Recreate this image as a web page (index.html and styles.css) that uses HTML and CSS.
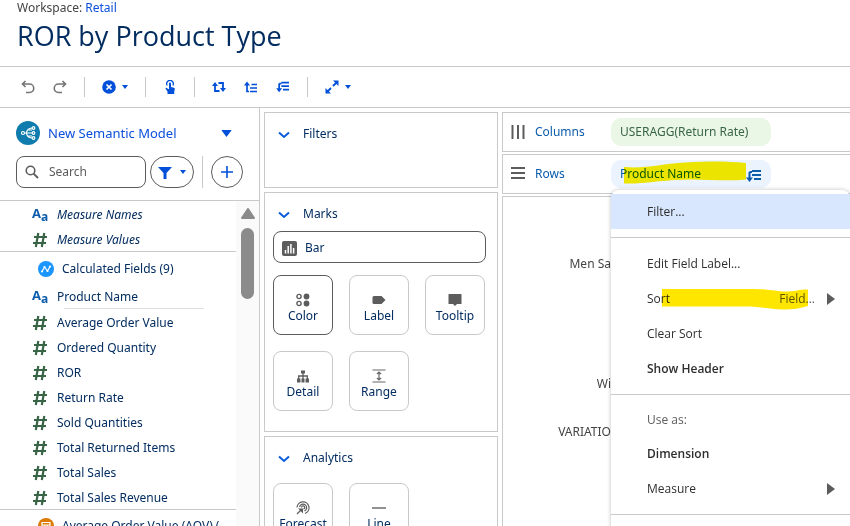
FILE: index.html
```html
<!DOCTYPE html>
<html lang="en">
<head>
<meta charset="utf-8">
<title>ROR by Product Type</title>
<link rel="stylesheet" href="styles.css">
</head>
<body>
<svg class="defs" aria-hidden="true">
  <symbol id="hash" viewBox="0 0 16 16"><path d="M6.300 1 3.800 15M12.300 1 9.800 15M2 5h13M1 11h13" fill="none" stroke="currentColor" stroke-width="2.200"/></symbol>
  <symbol id="chev" viewBox="0 0 12 8"><path d="M1 1.500 6 6l5-4.500" fill="none" stroke="currentColor" stroke-width="2"/></symbol>
  <symbol id="caret" viewBox="0 0 6 4"><path d="M0 0h6L3 4z" fill="currentColor"/></symbol>
  <symbol id="sortdesc" viewBox="0 0 16 14"><path d="M3.500 3v7M6 2h9M6 6h9M8 10h7M3.500 3H6" fill="none" stroke="currentColor" stroke-width="2"/><path d="M0 8.500h7L3.500 13z" fill="currentColor"/></symbol>
</svg>
<header class="head">
  <div class="crumb">Workspace: <a href="#">Retail</a></div>
  <h1>ROR by Product Type</h1>
</header>
<nav class="toolbar">
  <button class="tool grey" aria-label="Undo"><svg width="14" height="14" viewBox="0 0 14 14"><path d="M4.500 1 1.500 4l3 3M1.500 4H8.500a4 4 0 0 1 0 8.500H5" fill="none" stroke="currentColor" stroke-width="1.600"/></svg></button>
  <button class="tool grey" aria-label="Redo"><svg width="14" height="14" viewBox="0 0 14 14"><path d="M9.500 1l3 3-3 3M12.500 4H5.500a4 4 0 0 0 0 8.500H9" fill="none" stroke="currentColor" stroke-width="1.600"/></svg></button>
  <span class="sep"></span>
  <button class="tool wide" aria-label="Clear"><svg width="14" height="14" viewBox="0 0 14 14"><circle cx="7" cy="7" r="6.800" fill="currentColor"/><path d="M4.500 4.500l5 5M9.500 4.500l-5 5" stroke="#fff" stroke-width="1.700"/></svg><svg width="6" height="4"><use href="#caret"/></svg></button>
  <span class="sep"></span>
  <button class="tool" aria-label="Interact"><svg width="10" height="14" viewBox="0 0 10 14"><path d="M2.200 5.500A3.300 3.300 0 1 1 7.800 5.500" fill="none" stroke="currentColor" stroke-width="1.300"/><path d="M4 3.500a1 1 0 0 1 2 0V7l3 .8q1 .3.8 1.400L9.200 11.500H2.500L.4 8.500q.8-1.400 2 0L4 9.300zM2.500 11h6.700V14H2.500z" fill="currentColor"/></svg></button>
  <span class="sep"></span>
  <button class="tool" aria-label="Swap rows and columns"><svg width="14" height="12" viewBox="0 0 14 12"><path d="M3 3.500V10h4.500M6.500 2H11v6" fill="none" stroke="currentColor" stroke-width="1.800"/><path d="M0 5h6L3 1zM8 7h6l-3 4z" fill="currentColor"/></svg></button>
  <button class="tool" aria-label="Sort ascending"><svg width="14" height="12" viewBox="0 0 14 12"><path d="M3 3v7.500h2M7.500 3.500H13M6 7h7M6 10.500h7" fill="none" stroke="currentColor" stroke-width="1.700"/><path d="M0 4.500h6L3 .5z" fill="currentColor"/></svg></button>
  <button class="tool" aria-label="Sort descending"><svg width="14" height="12" viewBox="0 0 16 14"><use href="#sortdesc"/></svg></button>
  <span class="sep"></span>
  <button class="tool wide" aria-label="Fit"><svg width="14" height="14" viewBox="0 0 14 14"><path d="M2 12l4-4M8 6l4-4" stroke="currentColor" stroke-width="1.800"/><path d="M8 .5h5.500V6zM.5 8v5.500H6z" fill="currentColor"/></svg><svg width="6" height="4"><use href="#caret"/></svg></button>
</nav>
<main class="work">
  <aside class="side">
    <div class="model">
      <svg width="24" height="24" viewBox="0 0 24 24"><circle cx="12" cy="12" r="12" fill="#107cad"/><g fill="none" stroke="#fff" stroke-width="1.200"><circle cx="7" cy="12" r="1.500"/><circle cx="17.500" cy="7" r="1.300"/><circle cx="17.500" cy="12" r="1.300"/><circle cx="17.500" cy="17" r="1.300"/><path d="M8.500 12H16M10.500 12q.3-4.500 5.500-5M10.500 12q.3 4.500 5.500 5M12 9h4M12 15h4"/></g></svg>
      <a href="#">New Semantic Model</a>
      <button class="tool" aria-label="Choose model"><svg width="11" height="7" viewBox="0 0 6 4"><use href="#caret"/></svg></button>
    </div>
    <div class="find">
      <label class="search"><svg width="14" height="14" viewBox="0 0 14 14"><circle cx="5.500" cy="5.500" r="4.300" fill="none" stroke="#5c5c5c" stroke-width="1.600"/><path d="M8.600 8.600 13 13" stroke="#5c5c5c" stroke-width="1.900"/></svg><input type="text" placeholder="Search" aria-label="Search"></label>
      <button class="pillbtn" aria-label="Filter fields"><svg width="14" height="13" viewBox="0 0 14 13"><path d="M0 1h14L8.500 7V13h-3V7z" fill="currentColor"/></svg><svg width="6" height="4"><use href="#caret"/></svg></button>
      <span class="sep"></span>
      <button class="round" aria-label="Add"><svg width="12" height="12" viewBox="0 0 12 12"><path d="M6 0v12M0 6h12" stroke="currentColor" stroke-width="1.600"/></svg></button>
    </div>
    <div class="fields">
      <div class="list">
        <ul class="group top">
          <li class="ital"><span class="aa">A<small>a</small></span>Measure Names</li>
          <li class="ital"><svg class="ic"><use href="#hash"/></svg>Measure Values</li>
        </ul>
        <div class="folder"><svg width="16" height="16" viewBox="0 0 16 16"><circle cx="8" cy="8" r="8" fill="#1b96ff"/><path d="M4 10.500 6.500 6l3 4L12 5.500" fill="none" stroke="#fff" stroke-width="1.200"/><g fill="#fff"><circle cx="4" cy="10.500" r="1.100"/><circle cx="6.500" cy="6" r="1.100"/><circle cx="9.500" cy="10" r="1.100"/><circle cx="12" cy="5.500" r="1.100"/></g></svg>Calculated Fields (9)</div>
        <ul class="group"><li><span class="aa">A<small>a</small></span>Product Name</li></ul>
        <hr>
        <ul class="group">
          <li><svg class="ic"><use href="#hash"/></svg>Average Order Value</li>
          <li><svg class="ic"><use href="#hash"/></svg>Ordered Quantity</li>
          <li><svg class="ic"><use href="#hash"/></svg>ROR</li>
          <li><svg class="ic"><use href="#hash"/></svg>Return Rate</li>
          <li><svg class="ic"><use href="#hash"/></svg>Sold Quantities</li>
          <li><svg class="ic"><use href="#hash"/></svg>Total Returned Items</li>
          <li><svg class="ic"><use href="#hash"/></svg>Total Sales</li>
          <li><svg class="ic"><use href="#hash"/></svg>Total Sales Revenue</li>
        </ul>
        <div class="folder last"><svg width="16" height="16" viewBox="0 0 16 16"><circle cx="8" cy="8" r="8" fill="#dd7a01"/><path d="M4 4.500h8v7H4zM4 7h8M6.700 7v4.500M9.300 7v4.500" fill="none" stroke="#fff" stroke-width="1.200"/></svg>Average Order Value (AOV) (</div>
      </div>
      <div class="gutter"><svg width="14" height="11" viewBox="0 0 14 11"><path d="M7 1 13 10H1z" fill="#8b8b8b" stroke="#8b8b8b" stroke-width="2" stroke-linejoin="round"/></svg><span class="thumb"></span></div>
    </div>
  </aside>
  <section class="cards">
    <div class="card filters"><h2><svg width="12" height="8"><use href="#chev"/></svg>Filters</h2></div>
    <div class="card marks"><h2><svg width="12" height="8"><use href="#chev"/></svg>Marks</h2>
      <button class="marktype"><svg width="15" height="15" viewBox="0 0 15 15"><rect width="15" height="15" rx="2" fill="#5c5c5c"/><path d="M3.500 12.500V9M6.200 12.500V5M8.900 12.500V3M11.600 12.500V7" stroke="#fff" stroke-width="1.500"/></svg>Bar</button>
      <div class="tiles">
        <button class="tile on"><svg width="14" height="14" viewBox="0 0 14 14"><g fill="none" stroke="#5c5c5c" stroke-width="1.400"><circle cx="3" cy="3.500" r="2.100"/><circle cx="3" cy="10.500" r="2.100"/></g><g fill="#5c5c5c"><circle cx="10.500" cy="3.500" r="2.900"/><circle cx="10.500" cy="10.500" r="2.900"/></g></svg>Color</button>
        <button class="tile"><svg width="14" height="14" viewBox="0 0 14 14"><path d="M2 3h7.500L13.500 7l-4 4H2Q.500 11 .500 9.500v-5Q.500 3 2 3z" fill="#5c5c5c"/></svg>Label</button>
        <button class="tile"><svg width="14" height="14" viewBox="0 0 14 14"><path d="M1 1h12q.500 0 .500.500V11H9l-2 2-2-2H.500V1.500Q.500 1 1 1z" fill="#5c5c5c"/></svg>Tooltip</button>
        <button class="tile"><svg width="14" height="14" viewBox="0 0 14 14"><path d="M5 1.500h4v3H5zM1 9.500h3.500v4H1zM5.500 9.500h3v4h-3zM9.500 9.500H13v4H9.500z" fill="#5c5c5c"/><path d="M7 4v6M2.700 10V7h8.600v3" fill="none" stroke="#5c5c5c" stroke-width="1.300"/></svg>Detail</button>
        <button class="tile"><svg width="14" height="14" viewBox="0 0 14 14"><path d="M.500 1h13M.500 13h13M7 3v8M5 5l2-2 2 2M5 9l2 2 2-2" fill="none" stroke="#666" stroke-width="1.200"/></svg>Range</button>
      </div>
    </div>
    <div class="card analytics"><h2><svg width="12" height="8"><use href="#chev"/></svg>Analytics</h2>
      <div class="tiles">
        <button class="tile"><svg width="14" height="14" viewBox="0 0 14 14"><path d="M1 6.500a6 6 0 1 1 8 6M3.500 6a3.600 3.600 0 1 1 5 4M5.500 6.500a1.600 1.600 0 1 1 2 1.500M1 13l4.500-4.500" fill="none" stroke="#5c5c5c" stroke-width="1.200"/><path d="M2 7.500h5v5z" fill="#5c5c5c"/></svg>Forecast</button>
        <button class="tile"><svg width="14" height="14" viewBox="0 0 14 14"><path d="M0 7h14" stroke="#777" stroke-width="1.600"/></svg>Line</button>
      </div>
    </div>
  </section>
  <section class="view">
    <div class="shelf"><svg width="14" height="14" viewBox="0 0 14 14"><path d="M1.500 0v14M7 0v14M12.500 0v14" stroke="#5c5c5c" stroke-width="2"/></svg><span class="name">Columns</span><button class="pill green">USERAGG(Return Rate)</button></div>
    <div class="shelf"><svg width="14" height="14" viewBox="0 0 14 14"><path d="M0 1h14M0 6h14M0 11h14" stroke="#5c5c5c" stroke-width="2"/></svg><span class="name">Rows</span>
      <div class="anchor">
        <button class="pill blue">Product Name<svg width="16" height="18" viewBox="0 -4 16 18"><path d="M3.500 3v7M6 2h9M6 6h9M8 10h7M3.500 3H6" fill="none" stroke="currentColor" stroke-width="2"/><path d="M0 8.500h7L3.500 13z" fill="currentColor"/></svg></button>
        <svg class="marker m1" width="124" height="26" viewBox="0 0 124 26"><path d="M1 7C22 9 38 4 62 2.500S104 1 123 3V19.500C98 22 78 18 52 20S16 24 1 23.500z" fill="#fff000"/></svg>
        <div class="menu" role="menu">
          <button class="item hot">Filter...</button>
          <hr>
          <button class="item">Edit Field Label...</button>
          <button class="item">Sort<span class="val">Field...</span><i class="arrow"></i><svg class="marker m2" width="146" height="22" viewBox="0 0 146 22"><path d="M0 1H90C108 1 116 4 126 3.500S138 1 146 1.500V18C134 22 120 22 108 20.500S92 18.500 80 18.500H0z" fill="#ffe600"/></svg></button>
          <button class="item">Clear Sort</button>
          <button class="item strong">Show Header</button>
          <hr>
          <div class="item note">Use as:</div>
          <button class="item strong">Dimension</button>
          <button class="item">Measure<i class="arrow"></i></button>
          <hr>
        </div>
      </div>
    </div>
    <div class="canvas">
      <span>Men Sa</span><span>Wi</span><span>VARIATIO</span>
    </div>
  </section>
</main>
</body>
</html>
```
FILE: styles.css
```css
* { box-sizing: border-box; }
body {
  margin: 0;
  height: 100vh;
  overflow: hidden;
  display: flex;
  flex-direction: column;
  background: #fff;
  color: #032d60;
  font: 12px/20px "Noto Sans", "Open Sans", sans-serif;
}
button, input { font: inherit; color: inherit; background: none; border: 0; padding: 0; margin: 0; }
button { cursor: pointer; }
a { color: #0b4fdb; text-decoration: none; }
svg { flex: none; display: block; }
.defs { position: absolute; width: 0; height: 0; }
h1, h2, ul { margin: 0; padding: 0; font-weight: 400; list-style: none; }
hr { border: 0; margin: 0; height: 1px; background: #c9c9c9; }

.head { height: 66px; padding: 0 17px; flex: none; }
.crumb { line-height: 16px; color: #444; }
h1 { font: 27px/40px "Open Sans", sans-serif; color: #032d60; }

.toolbar {
  flex: none;
  height: 42px;
  padding: 0 12px;
  display: flex;
  align-items: center;
  border: solid #c9c9c9;
  border-width: 1px 0;
}
.tool { width: 16px; height: 20px; display: flex; align-items: center; justify-content: center; gap: 6px; color: #0250d9; }
.toolbar .tool { margin: 0 8px; }
.toolbar .tool.wide { width: 28px; margin: 0 16px; }
.toolbar .grey { color: #747474; }
.sep { width: 1px; height: 20px; background: #c9c9c9; }
.toolbar .sep { margin: 0 0 0 8px; }
.toolbar .wide + .sep { margin-left: 0; }
.toolbar .sep + .tool { margin-left: 16px; }

.work { flex: 1; min-height: 0; display: flex; }
.side { width: 260px; flex: none; border-right: 1px solid #c9c9c9; display: flex; flex-direction: column; }
.model { height: 48px; padding: 2px 27px 0 16px; display: flex; align-items: center; gap: 8px; font-size: 13px; }
.model .tool { margin-left: auto; width: 12px; }
.find { height: 32px; padding: 0 16px; display: flex; align-items: center; }
.search { flex: 1; height: 32px; border: 1px solid #5c5c5c; border-radius: 8px; display: flex; align-items: center; gap: 10px; padding: 0 8px; }
.search input { width: 100%; min-width: 0; outline: 0; }
.search input::placeholder { color: #5c5c5c; opacity: 1; }
.pillbtn, .round { height: 32px; border: 1px solid #5c5c5c; border-radius: 16px; color: #0250d9; display: flex; align-items: center; justify-content: center; }
.pillbtn { width: 44px; gap: 8px; margin: 0 8px 0 4px; }
.find .sep { height: 32px; }
.round { width: 32px; margin-left: 8px; }
.fields { flex: 1; min-height: 0; margin-top: 12px; border-top: 1px solid #c9c9c9; display: flex; overflow: hidden; }
.list { flex: 1; min-width: 0; }
.group li { height: 25px; padding: 2px 0 0 32px; display: flex; align-items: center; gap: 9px; }
.group.top { border-bottom: 1px solid #c9c9c9; }
.ital { font-style: italic; }
.ic { width: 16px; height: 16px; color: #396547; }
.aa { width: 16px; height: 20px; font: 700 13px/16px "Open Sans", sans-serif; color: #0b5cab; display: flex; }
.aa small { font-size: 12px; line-height: 16px; align-self: flex-end; }
.folder { height: 31px; padding: 2px 0 0 38px; display: flex; align-items: center; gap: 8px; white-space: nowrap; }
.list hr { margin: 0 32px 0 64px; background: #ddd; }
.folder.last { border-top: 1px solid #c9c9c9; }
.gutter { width: 23px; background: #fafafa; display: flex; flex-direction: column; align-items: center; gap: 9px; padding-top: 7px; }
.thumb { width: 13px; height: 71px; border-radius: 7px; background: #8b8b8b; }

.cards { width: 238px; flex: none; padding: 4px 0 0 4px; display: flex; flex-direction: column; gap: 4px; }
.card { flex: none; border: 1px solid #c9c9c9; padding: 0 8px; }
.filters { height: 76px; }
.marks { height: 240px; }
.analytics { height: 160px; }
.card h2 { font-size: 12px; height: 38px; padding: 4px 0 0 5px; display: flex; align-items: center; gap: 13px; }
.card h2 svg { color: #0b5cdb; margin-top: 2px; }
.marktype { width: 213px; height: 32px; border: 1px solid #5c5c5c; border-radius: 8px; display: flex; align-items: center; gap: 8px; padding: 2px 8px 0; }
.tiles { display: grid; grid-template-columns: repeat(3, 60px); gap: 16px; padding-top: 12px; }
.analytics .tiles { padding-top: 8px; }
.tile { height: 60px; border: 1px solid #c9c9c9; border-radius: 8px; display: flex; flex-direction: column; align-items: center; padding-top: 17px; line-height: 18px; }
.tile.on { border-color: #5c5c5c; }

.view { flex: 1; min-width: 0; padding: 4px 0 0 4px; display: flex; flex-direction: column; gap: 2px; }
.shelf { flex: none; height: 40px; border: 1px solid #c9c9c9; border-right: 0; display: flex; align-items: center; padding-left: 8px; }
.name { width: 76px; margin-left: 10px; color: #0b5cab; }
.anchor { position: relative; flex: 1; }
.pill { width: 160px; height: 28px; border-radius: 10px; padding: 0 9px; display: flex; align-items: center; justify-content: space-between; white-space: nowrap; }
.green { background: #ebf7e6; color: #396547; }
.blue { background: #ebf3ff; color: #0b5cab; }
.marker { position: absolute; mix-blend-mode: multiply; pointer-events: none; }
.m1 { left: 12px; top: 0; }
.m2 { left: 51px; top: 7px; }
.menu { position: absolute; left: 0; right: 0; top: 30px; padding: 4px 0 16px; background: #fff; border-radius: 8px; box-shadow: 0 0 4px rgba(0, 0, 0, .25); color: #2e2e2e; font-family: "Open Sans", sans-serif; }
.item { position: relative; width: 100%; height: 35px; padding: 0 15px 0 36px; display: flex; align-items: center; text-align: left; }
.hot { background: #d8e6fe; }
.menu hr { margin: 8px 0; }
.val { margin-left: auto; color: #5c5c5c; }
.arrow { margin-left: auto; border: solid transparent; border-width: 6px 0 6px 8px; border-left-color: #5c5c5c; }
.val + .arrow { margin-left: 12px; }
.strong { font-weight: 600; }
.note { height: 33px; color: #5c5c5c; }
.canvas { flex: 1; border: 1px solid #c9c9c9; border-width: 1px 0 0 1px; padding-top: 57px; color: #444; }
.canvas span { display: block; width: 108px; text-align: right; margin-bottom: 28px; }
.canvas span:first-child { margin-bottom: 100px; }
```
